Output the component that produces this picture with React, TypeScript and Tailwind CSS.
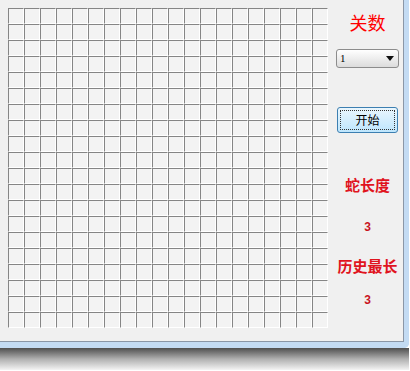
const cells = Array.from({ length: 400 }, (_, i) => i);

const App = () => {
  return (
    <div className="w-[410px] h-[371px] bg-white overflow-hidden relative">
      <div className="w-[409px] rounded-br-[5px] border-r-[5px] border-b-[6px] border-[#c3dbf3] relative z-10">
        <div className="h-[342px] bg-[#f0f0f0] border-r border-b border-[#8a96a6] flex">
          <div className="pt-2 pl-2">
            <div className="grid grid-cols-[repeat(20,16px)] grid-rows-[repeat(20,16px)]">
              {cells.map((i) => (
                <div
                  key={i}
                  className="w-4 h-4 border-l border-t border-[#858585] border-r-white border-b-white border-r border-b bg-[#f3f3f3]"
                />
              ))}
            </div>
          </div>
          <div
            className="flex-1 flex flex-col items-center pl-[4px]"
            style={{ fontFamily: '"Noto Sans CJK SC", sans-serif' }}
          >
            <div className="mt-[11px] text-[18px] leading-[22px] text-[#ff0000]">关数</div>
            <div className="mt-[16px] w-[63px] h-[19px] rounded-[3px] border border-[#8c8c8c] bg-gradient-to-b from-white to-[#dcdcdc] flex items-center justify-between pl-[3px] pr-[4px]">
              <span className="text-[11px] leading-none text-black" style={{ fontFamily: '"Liberation Serif", serif' }}>1</span>
              <svg width="8" height="5" viewBox="0 0 8 5">
                <path d="M0 0 L8 0 L4 5 Z" fill="#111" />
              </svg>
            </div>
            <div className="mt-[39px] w-[61px] h-[26px] rounded-[3px] border border-[#3c7fb1] bg-gradient-to-b from-[#eaf6fd] to-[#bee6fd] p-[2px]">
              <div className="w-full h-full border border-dotted border-[#333] flex items-center justify-center text-[12px] text-black">
                开始
              </div>
            </div>
            <div className="mt-[42px] text-[15px] leading-[20px] font-bold text-[#e0141e]">蛇长度</div>
            <div className="mt-[24px] text-[12px] leading-[16px] font-bold text-[#c8141e]" style={{ fontFamily: '"Liberation Sans", sans-serif' }}>3</div>
            <div className="mt-[21px] text-[15px] leading-[20px] font-bold text-[#e0141e]">历史最长</div>
            <div className="mt-[16px] text-[12px] leading-[16px] font-bold text-[#c8141e]" style={{ fontFamily: '"Liberation Sans", sans-serif' }}>3</div>
          </div>
        </div>
      </div>
      <div className="h-[22px] w-[409px] bg-gradient-to-b from-[#505050] via-[#b0b0b0] to-[#f4f4f4]" />
    </div>
  );
};

export default App;
